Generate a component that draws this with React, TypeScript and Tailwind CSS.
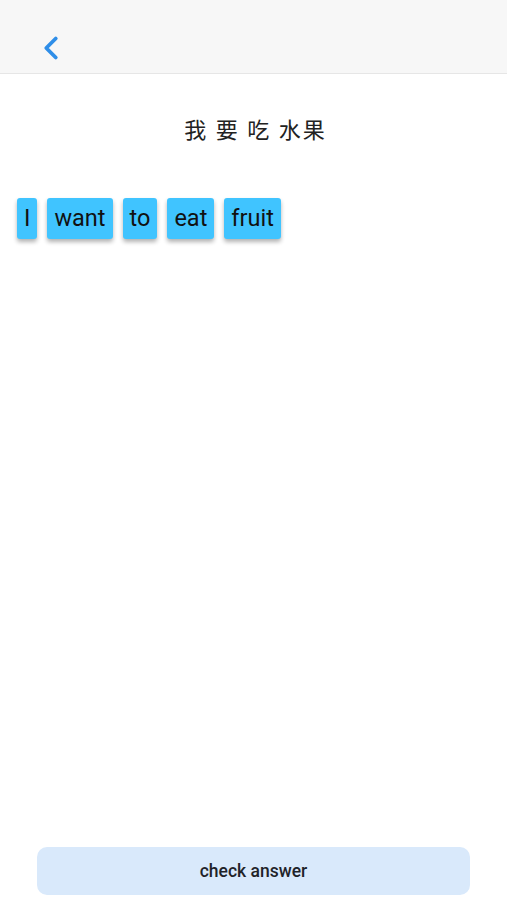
import { ChevronLeft } from 'lucide-react';

const words = ['I', 'want', 'to', 'eat', 'fruit'];

export default function App() {
    return (
        <div className="relative w-[507px] h-[900px] bg-white overflow-hidden" style={{ fontFamily: 'Roboto, "Noto Sans CJK SC", sans-serif' }}>
            {/* Header */}
            <div className="h-[74px] bg-[#f7f7f7] border-b border-[#e6e6e6] flex items-center pl-[32px] pt-[22px]">
                <ChevronLeft className="w-[38px] h-[38px] text-[#2f8ee8]" strokeWidth={2.4} />
            </div>

            {/* Prompt */}
            <div className="pt-[42px] text-center text-[22px] leading-[30px] text-[#222] tracking-[2px] pl-[4px]">
                我 要 吃 水果
            </div>

            {/* Word chips */}
            <div className="flex gap-[10px] px-[17px] mt-[52px]">
                {words.map(w => (
                    <div key={w} className="h-[41px] px-[7px] flex items-center bg-[#40c4ff] rounded-[3px] shadow-[0_3px_4px_rgba(0,0,0,0.3)] text-[23.5px] text-[#111]">
                        {w}
                    </div>
                ))}
            </div>

            {/* Bottom button */}
            <div className="absolute left-[37px] right-[37px] bottom-[5px]">
                <button className="w-full h-[48px] bg-[#d9e9fb] rounded-[10px] text-[17.5px] font-medium text-[#1f2329]">
                    check answer
                </button>
            </div>
        </div>
    );
}
